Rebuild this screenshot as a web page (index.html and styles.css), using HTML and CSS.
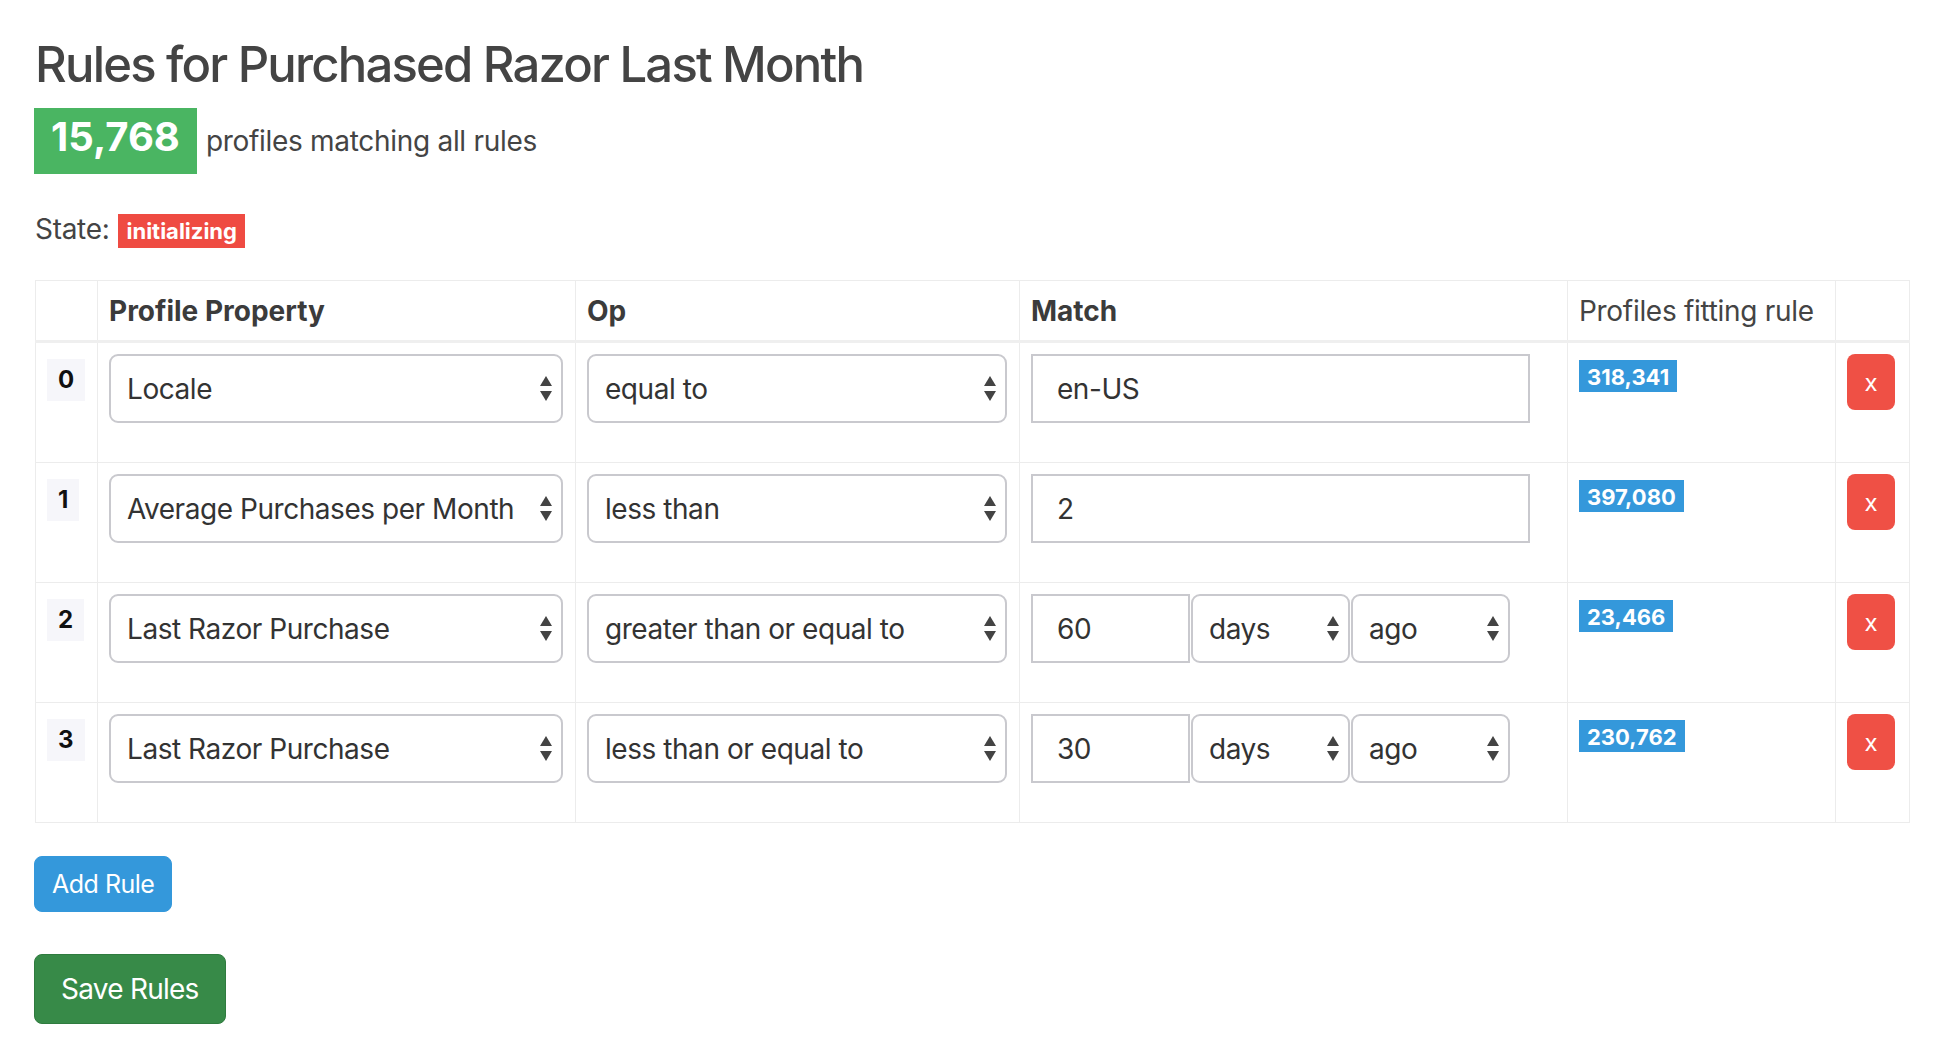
FILE: index.html
```html
<!DOCTYPE html>
<html lang="en">
<head>
<meta charset="utf-8">
<title>Rules for Purchased Razor Last Month</title>
<link rel="stylesheet" href="styles.css">
</head>
<body>
<div class="page">
  <h1 class="title">Rules for Purchased Razor Last Month</h1>
  <div class="summary">
    <span class="count-badge">15,768</span>
    <span class="summary-text">profiles matching all rules</span>
  </div>
  <div class="state">
    <span class="state-label">State:</span>
    <span class="state-badge">initializing</span>
  </div>

  <table class="rules">
    <colgroup>
      <col class="c-idx"><col class="c-prop"><col class="c-op"><col class="c-match"><col class="c-fit"><col class="c-del">
    </colgroup>
    <thead>
      <tr>
        <th></th>
        <th>Profile Property</th>
        <th>Op</th>
        <th>Match</th>
        <th class="th-normal">Profiles fitting rule</th>
        <th></th>
      </tr>
    </thead>
    <tbody>
      <tr>
        <td><span class="idx">0</span></td>
        <td><div class="group"><select class="field select"><option>Locale</option></select></div></td>
        <td><div class="group"><select class="field select"><option>equal to</option></select></div></td>
        <td><div class="group"><input class="field input input-wide" value="en-US"></div></td>
        <td><span class="fit-badge">318,341</span></td>
        <td><button class="del">x</button></td>
      </tr>
      <tr>
        <td><span class="idx">1</span></td>
        <td><div class="group"><select class="field select"><option>Average Purchases per Month</option></select></div></td>
        <td><div class="group"><select class="field select"><option>less than</option></select></div></td>
        <td><div class="group"><input class="field input input-wide" value="2"></div></td>
        <td><span class="fit-badge">397,080</span></td>
        <td><button class="del">x</button></td>
      </tr>
      <tr>
        <td><span class="idx">2</span></td>
        <td><div class="group"><select class="field select"><option>Last Razor Purchase</option></select></div></td>
        <td><div class="group"><select class="field select"><option>greater than or equal to</option></select></div></td>
        <td><div class="group date-group">
          <input class="field input input-num" value="60">
          <select class="field select select-small"><option>days</option></select>
          <select class="field select select-small"><option>ago</option></select>
        </div></td>
        <td><span class="fit-badge">23,466</span></td>
        <td><button class="del">x</button></td>
      </tr>
      <tr>
        <td><span class="idx">3</span></td>
        <td><div class="group"><select class="field select"><option>Last Razor Purchase</option></select></div></td>
        <td><div class="group"><select class="field select"><option>less than or equal to</option></select></div></td>
        <td><div class="group date-group">
          <input class="field input input-num" value="30">
          <select class="field select select-small"><option>days</option></select>
          <select class="field select select-small"><option>ago</option></select>
        </div></td>
        <td><span class="fit-badge">230,762</span></td>
        <td><button class="del">x</button></td>
      </tr>
    </tbody>
  </table>

  <div class="actions">
    <button class="btn btn-add">Add Rule</button>
    <button class="btn btn-save">Save Rules</button>
  </div>
</div>
</body>
</html>
```

FILE: styles.css
```css
* { box-sizing: border-box; }

html, body {
  margin: 0;
  padding: 0;
  background: #fff;
}

body {
  font-family: Inter, "Liberation Sans", sans-serif;
  font-size: 28px;
  line-height: 42px;
  color: #444;
}

.page {
  padding: 35px 37px 20px 35px;
}

.title {
  margin: 0;
  font-size: 49px;
  line-height: 59px;
  font-weight: 500;
  letter-spacing: -1.8px;
  color: #444;
}

.summary {
  display: flex;
  align-items: baseline;
  margin-top: 14px;
}

.count-badge {
  display: inline-block;
  background: #4ab562;
  color: #fff;
  font-weight: 700;
  font-size: 40px;
  line-height: 50px;
  padding: 4px 17px 12px 17px;
  margin-left: -1px;
}

.summary-text {
  margin-left: 9px;
  letter-spacing: -0.3px;
}

.state {
  display: flex;
  align-items: baseline;
  margin-top: 34px;
}

.state-label {
  letter-spacing: -0.3px;
}

.state-badge {
  display: inline-block;
  margin-left: 9px;
  background: #ef4b42;
  color: #fff;
  font-weight: 700;
  font-size: 22px;
  line-height: 26px;
  padding: 4px 8px;
}

.rules {
  margin-top: 30px;
  width: 100%;
  border-collapse: collapse;
  table-layout: fixed;
  border: 1px solid #ececec;
}

.c-idx { width: 62px; }
.c-prop { width: 478px; }
.c-op { width: 444px; }
.c-match { width: 548px; }
.c-fit { width: 268px; }
.c-del { width: 74px; }

.rules th {
  text-align: left;
  font-weight: 700;
  color: #3b3b3b;
  padding: 9px 11px 8px 11px;
  border-left: 1px solid #ececec;
  border-right: 1px solid #ececec;
  border-bottom: 3px solid #efefef;
  white-space: nowrap;
}

.rules th.th-normal {
  font-weight: 400;
  color: #444;
  letter-spacing: -0.3px;
}

.rules td {
  vertical-align: top;
  padding: 11px 12px 11px 11px;
  border: 1px solid #ececec;
}

.idx {
  display: inline-block;
  margin-top: 5px;
  padding: 0 11px;
  background: #f6f6fa;
  color: #111;
  font-weight: 700;
  font-size: 24px;
  line-height: 42px;
}

.group {
  margin-bottom: 28px;
}

.date-group {
  display: flex;
  gap: 1px;
}

.field {
  display: block;
  height: 69px;
  font-family: Inter, "Liberation Sans", sans-serif;
  font-size: 28px;
  letter-spacing: -0.45px;
  color: #333;
  background-color: #fff;
  border: 2px solid #c9c9ce;
  margin: 0;
}

.select {
  width: 100%;
  -webkit-appearance: none;
  appearance: none;
  border-radius: 9px;
  padding: 0 36px 0 16px;
  background-image: url("data:image/svg+xml,%3Csvg xmlns='http://www.w3.org/2000/svg' width='12' height='25' viewBox='0 0 12 25'%3E%3Cpolygon points='6,0 12,10 0,10' fill='%23444'/%3E%3Cpolygon points='0,15 12,15 6,25' fill='%23444'/%3E%3C/svg%3E");
  background-repeat: no-repeat;
  background-position: right 9px center;
  background-size: 12px 25px;
}

.input {
  border-radius: 0;
  padding: 0 16px 0 24px;
  outline: none;
}

.input-wide {
  width: 499px;
}

.input-num {
  width: 159px;
  flex: none;
}

.select-small {
  width: 159px;
  flex: none;
}

.fit-badge {
  display: inline-block;
  background: #3498db;
  color: #fff;
  font-weight: 700;
  font-size: 22px;
  line-height: 24px;
  padding: 5px 8px 3px 8px;
}

.del {
  display: block;
  width: 48px;
  height: 56px;
  border: none;
  border-radius: 8px;
  background: #ef5045;
  color: #fff;
  font-family: Inter, "Liberation Sans", sans-serif;
  font-size: 24px;
  padding: 0;
  cursor: pointer;
}

.actions {
  display: flex;
  flex-direction: column;
  align-items: flex-start;
  gap: 42px;
  margin-top: 33px;
}

.btn {
  font-family: Inter, "Liberation Sans", sans-serif;
  color: #fff;
  border-radius: 8px;
  cursor: pointer;
}

.btn-add {
  margin-left: -1px;
  height: 56px;
  padding: 0 17px;
  font-size: 25px;
  letter-spacing: -0.5px;
  background: #3498db;
  border: 1px solid #3498db;
}

.btn-save {
  margin-left: -1px;
  height: 70px;
  padding: 0 26px;
  font-size: 28px;
  letter-spacing: -0.75px;
  background: #378a48;
  border: 1px solid #2f7b3f;
}
```
